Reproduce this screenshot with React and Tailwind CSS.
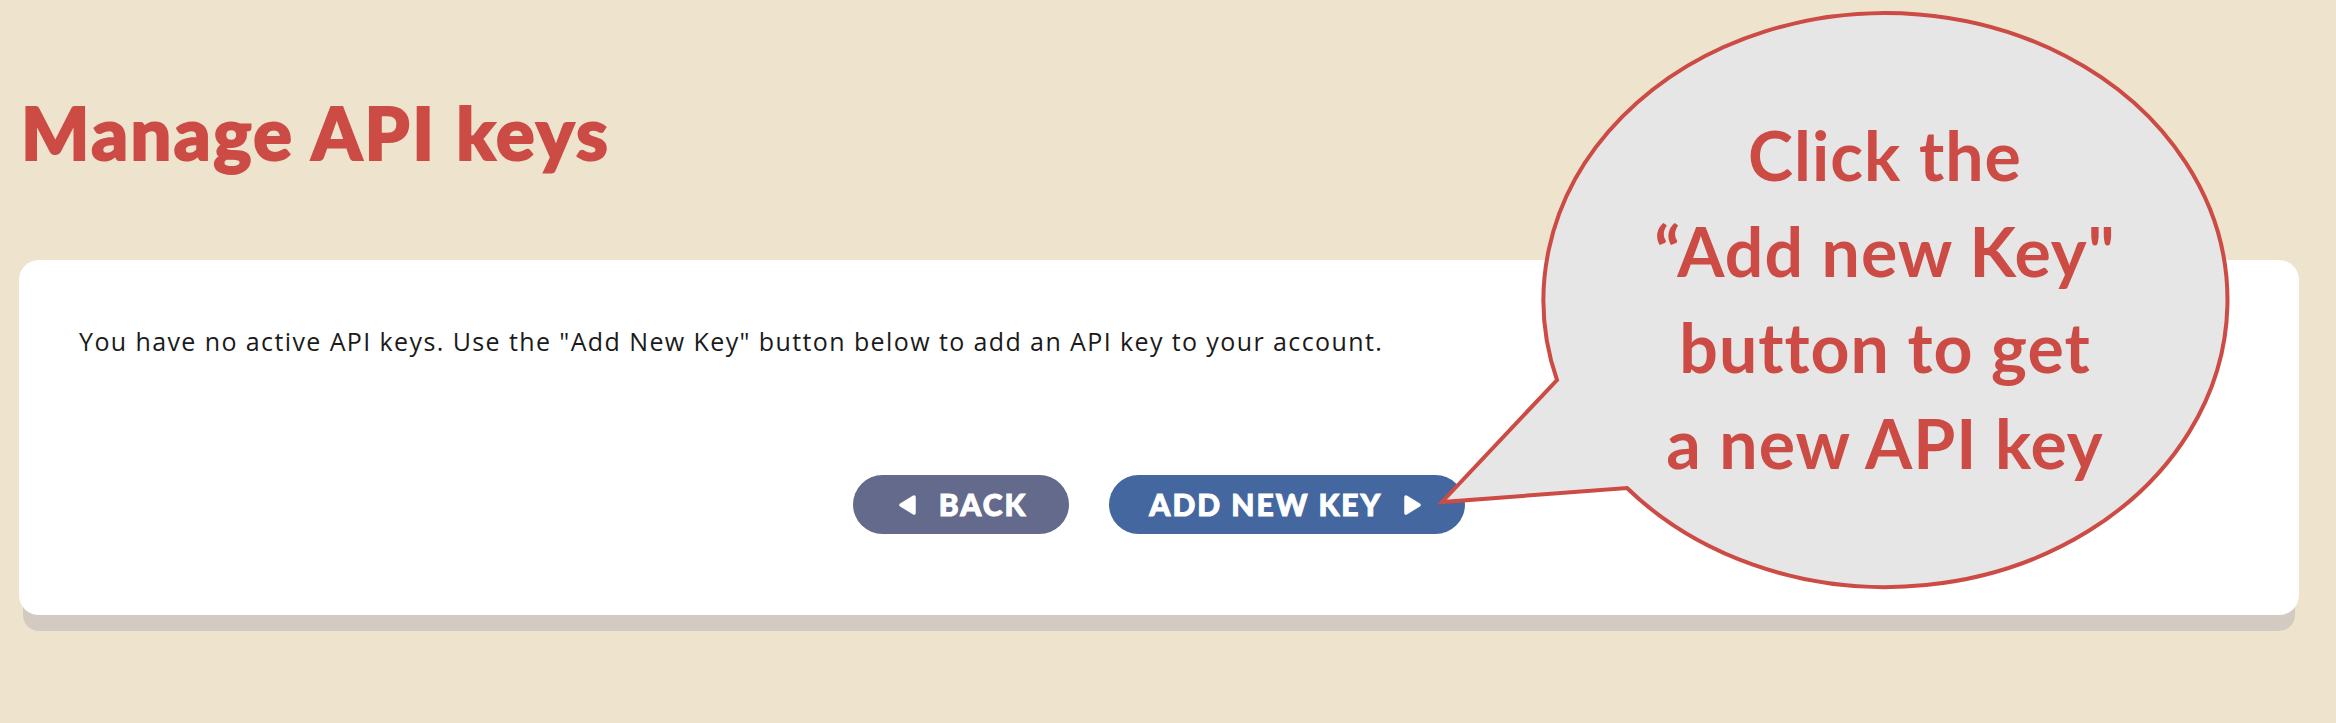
const Tri = ({ dir }) => (
  <svg width="22" height="22" viewBox="0 0 22 22" className="shrink-0">
    {dir === "left" ? (
      <path d="M17 3 L4 11 L17 19 Z" fill="white" stroke="white" strokeWidth="3.5" strokeLinejoin="round" />
    ) : (
      <path d="M5 3 L18 11 L5 19 Z" fill="white" stroke="white" strokeWidth="3.5" strokeLinejoin="round" />
    )}
  </svg>
);

const SpeechBubble = () => (
  <>
    <svg
      className="absolute left-0 top-0 pointer-events-none"
      width="2336"
      height="723"
      viewBox="0 0 2336 723"
    >
      <path
        d="M1557 380 A342 287 0 1 1 1627 488 L1442 502 Z"
        fill="#e6e6e6"
        stroke="#cc4b44"
        strokeWidth="4"
        strokeLinejoin="miter"
      />
    </svg>
    <div className="absolute left-[1585px] top-[107px] w-[600px] text-center text-[68px] leading-[96px] font-bold tracking-[1px] text-[#cc4b44] font-['Lato',sans-serif]">
      <div>Click the</div>
      <div>“Add new Key"</div>
      <div>button to get</div>
      <div>a new API key</div>
    </div>
  </>
);

const App = () => {
  return (
    <div className="relative w-[2336px] h-[723px] bg-[#eee3cd] overflow-hidden font-['Lato',sans-serif]">
      <div className="pt-[96px]">
        <h1 className="pl-[21px] text-[72px] leading-[72px] font-black tracking-[2.5px] text-[#cc4b44] [-webkit-text-stroke:2px_#cc4b44]">
          Manage API keys
        </h1>
        <div className="mt-[92px] ml-[19px] mr-[37px] bg-white rounded-[20px] shadow-[0_20px_0_-4px_#d3cbc1] pt-[63px] pb-[81px] px-[60px]">
          <p className="text-[25px] leading-[36px] tracking-[1.4px] text-[#1a1a1a] font-['Open_Sans',sans-serif]">
            You have no active API keys. Use the "Add New Key" button below to add an API key to your account.
          </p>
          <div className="mt-[116px] flex justify-center gap-[40px]">
            <button className="h-[59px] rounded-full bg-[#636a8b] pl-[44px] pr-[42px] flex items-center gap-[20px] text-white text-[30px] font-black tracking-[2px] [-webkit-text-stroke:1px_white]">
              <Tri dir="left" />
              <span>BACK</span>
            </button>
            <button className="h-[59px] rounded-full bg-[#4467a0] pl-[40px] pr-[42px] flex items-center gap-[19px] text-white text-[30px] font-black tracking-[2px] [-webkit-text-stroke:1px_white]">
              <span>ADD NEW KEY</span>
              <Tri dir="right" />
            </button>
          </div>
        </div>
      </div>
      <SpeechBubble />
    </div>
  );
};

export default App;
